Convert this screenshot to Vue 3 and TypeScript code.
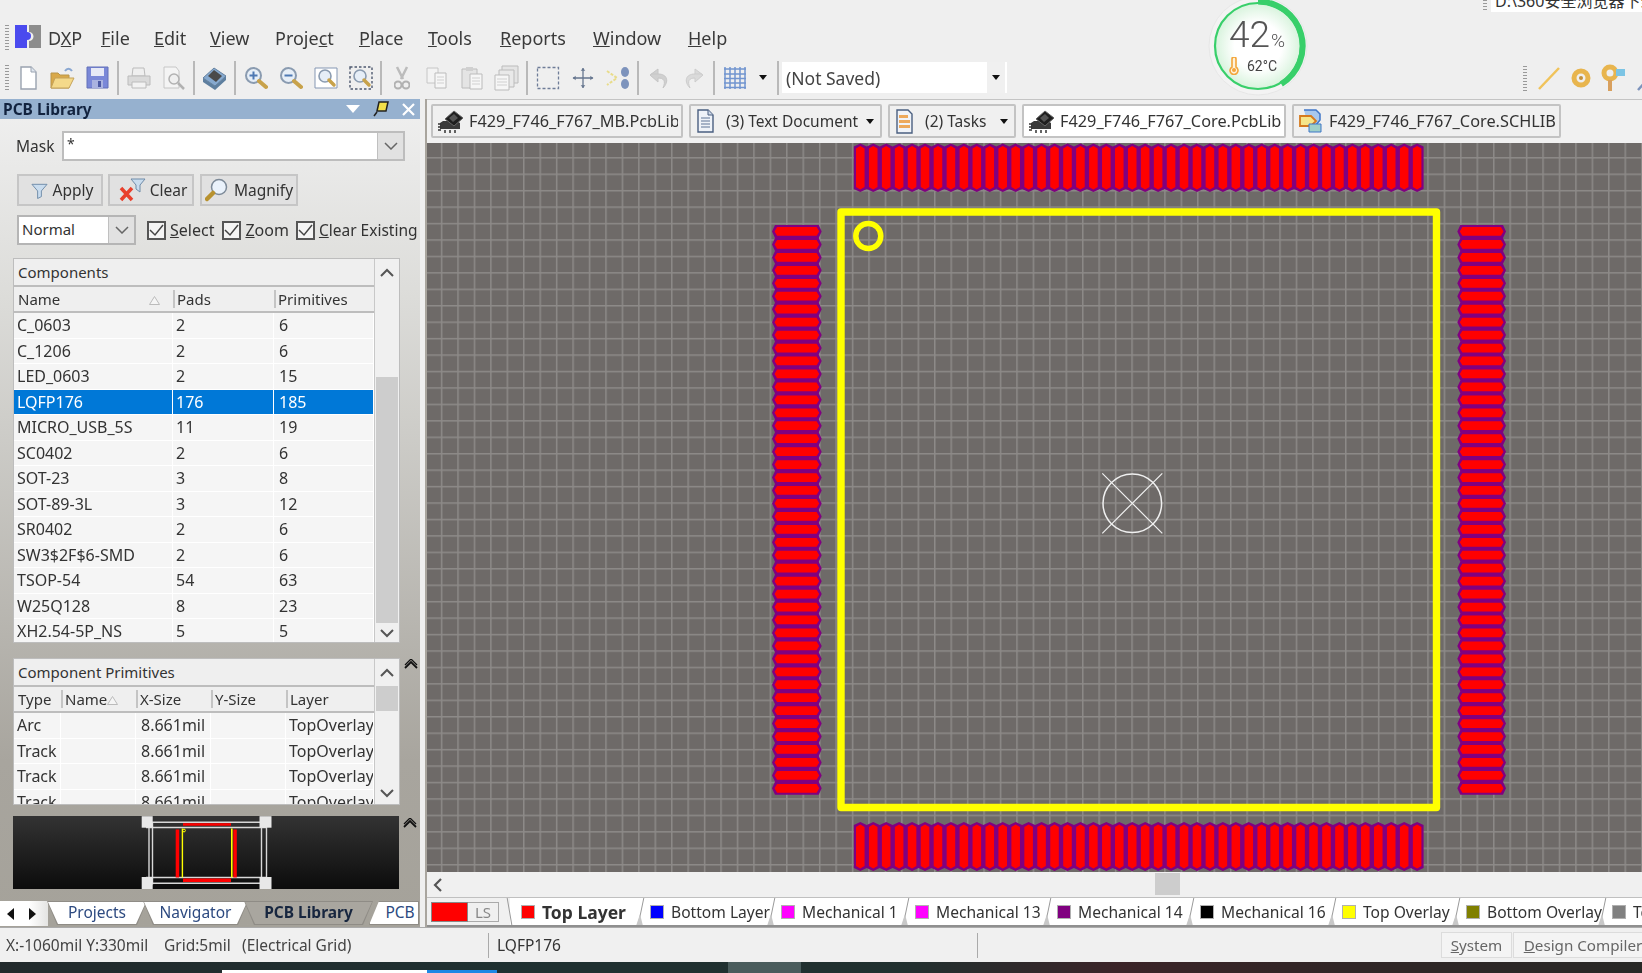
<script setup lang="ts">
const menus = [
  { pre: 'D', u: 'X', post: 'P', w: 53 },
  { pre: '', u: 'F', post: 'ile', w: 53 },
  { pre: '', u: 'E', post: 'dit', w: 56 },
  { pre: '', u: 'V', post: 'iew', w: 65 },
  { pre: 'Proje', u: 'c', post: 't', w: 84 },
  { pre: '', u: 'P', post: 'lace', w: 69 },
  { pre: '', u: 'T', post: 'ools', w: 72 },
  { pre: '', u: 'R', post: 'eports', w: 93 },
  { pre: '', u: 'W', post: 'indow', w: 95 },
  { pre: '', u: 'H', post: 'elp', w: 60 },
]
const components = [
  ['C_0603', '2', '6'],
  ['C_1206', '2', '6'],
  ['LED_0603', '2', '15'],
  ['LQFP176', '176', '185'],
  ['MICRO_USB_5S', '11', '19'],
  ['SC0402', '2', '6'],
  ['SOT-23', '3', '8'],
  ['SOT-89-3L', '3', '12'],
  ['SR0402', '2', '6'],
  ['SW3$2F$6-SMD', '2', '6'],
  ['TSOP-54', '54', '63'],
  ['W25Q128', '8', '23'],
  ['XH2.54-5P_NS', '5', '5'],
]
const primitives = ['Arc', 'Track', 'Track', 'Track']
const docTabs = [
  { name: 'F429_F746_F767_MB.PcbLib', icon: 'chip', w: 252, caret: false, active: false },
  { name: '(3) Text Document', icon: 'doc', w: 193, caret: true, active: false },
  { name: '(2) Tasks', icon: 'task', w: 128, caret: true, active: false },
  { name: 'F429_F746_F767_Core.PcbLib', icon: 'chip', w: 264, caret: false, active: true },
  { name: 'F429_F746_F767_Core.SCHLIB', icon: 'sch', w: 269, caret: false, active: false },
]
const layers = [
  { name: 'Top Layer', color: '#ff0000', w: 129, bold: true },
  { name: 'Bottom Layer', color: '#0000ff', w: 131, bold: false },
  { name: 'Mechanical 1', color: '#ff00ff', w: 134, bold: false },
  { name: 'Mechanical 13', color: '#ff00ff', w: 142, bold: false },
  { name: 'Mechanical 14', color: '#800080', w: 143, bold: false },
  { name: 'Mechanical 16', color: '#000000', w: 142, bold: false },
  { name: 'Top Overlay', color: '#ffff00', w: 124, bold: false },
  { name: 'Bottom Overlay', color: '#808000', w: 146, bold: false },
  { name: 'Top Solder', color: '#808080', w: 140, bold: false },
]
const pitch = 12.95
const count = Array.from({ length: 44 }, (_, i) => i)

function hPad(x: number, y: number, w: number, h: number, c: number): string {
  return `M${x + c} ${y}H${x + w - c}L${x + w} ${y + h / 2}L${x + w - c} ${y + h}H${x + c}L${x} ${y + h / 2}Z`
}
function vPad(x: number, y: number, w: number, h: number, c: number): string {
  return `M${x} ${y + c}L${x + w / 2} ${y}L${x + w} ${y + c}V${y + h - c}L${x + w / 2} ${y + h}L${x} ${y + h - c}Z`
}
const padOuter = count
  .map((i) => {
    const px = 853.8 + i * pitch
    const py = 225 + i * pitch
    return (
      vPad(px, 143.5, pitch, 48.5, 3) +
      vPad(px, 822, pitch, 49, 3) +
      hPad(772, py, 49.7, pitch, 3) +
      hPad(1457.3, py, 48.7, pitch, 3)
    )
  })
  .join('')
const padInner = count
  .map((i) => {
    const px = 853.8 + i * pitch
    const py = 225 + i * pitch
    return (
      vPad(px + 2.2, 146, pitch - 4.4, 43.5, 2.6) +
      vPad(px + 2.2, 824.5, pitch - 4.4, 44, 2.6) +
      hPad(774.5, py + 2.1, 44.7, pitch - 4.2, 2.6) +
      hPad(1459.8, py + 2.1, 43.7, pitch - 4.2, 2.6)
    )
  })
  .join('')
</script>

<template>
  <div class="app">
    <div class="menubar soft">
      <span class="grip"></span>
      <svg class="logo" width="26" height="23" viewBox="0 0 26 23">
        <path d="M0 0h12v7a3.500 3.500 0 0 1 0 8v8H0z" fill="#4a4aee" />
        <path d="M14 0h12v23H14v-7a4 4 0 0 0 0-9z" fill="#8d8d8d" />
      </svg>
      <span v-for="m in menus" :key="m.post + m.u" class="menu" :style="{ width: m.w + 'px' }">{{ m.pre }}<u>{{ m.u }}</u>{{ m.post }}</span>
    </div>

    <div class="toolbar soft">
      <span class="grip small"></span>
      <span class="ti"><svg width="20" height="24" viewBox="0 0 20 24"><path d="M3 1h10l5 5v17H3z" fill="#fff" stroke="#9aa3b0" stroke-width="1.400" /><path d="M13 1v5h5" fill="#dfe6ee" stroke="#9aa3b0" /></svg></span>
      <span class="ti"><svg width="25" height="24" viewBox="0 0 25 24"><path d="M1 7h7l2 2h9v13H1z" fill="#d9a94a" stroke="#b8954a" /><path d="M5 12h19l-5 10H1z" fill="#f4d98a" stroke="#c4a25a" /><path d="M15 5c2-3 5-3 7 0" fill="none" stroke="#8aa7d1" stroke-width="2" /></svg></span>
      <span class="ti"><svg width="23" height="23" viewBox="0 0 23 23"><path d="M1 1h21v21H1z" fill="#7a88d8" stroke="#6270b8" /><path d="M5 2h13v8H5z" fill="#e6e9f6" /><path d="M6 14h11v8H6z" fill="#aab3e0" /><path d="M12 15h3v6h-3z" fill="#4d5aa4" /></svg></span>
      <i class="sep"></i>
      <span class="ti fade"><svg width="24" height="22" viewBox="0 0 24 22"><path d="M6 1h11l1 8H5z" fill="#eee" stroke="#999" /><path d="M1 9h22v9H1z" fill="#ccc" stroke="#999" /><path d="M5 15h14v6H5z" fill="#f4f4f4" stroke="#999" /></svg></span>
      <span class="ti fade"><svg width="24" height="24" viewBox="0 0 24 24"><path d="M2 1h12l3 4v17H2z" fill="#f7f7f7" stroke="#aaa" /><circle cx="12" cy="13" r="5" fill="#eee" stroke="#888" stroke-width="1.500" /><path d="M16 17l6 6" stroke="#888" stroke-width="2.500" /></svg></span>
      <i class="sep"></i>
      <span class="ti"><svg width="25" height="24" viewBox="0 0 25 24"><path d="M1 12l11-10 12 8-11 10z" fill="#86a9cf" stroke="#64809e" /><path d="M1 12v4l12 8 11-10v-4L13 20z" fill="#5e7f9f" /><path d="M6 10l6-6 8 6-6 6z" fill="#4a4a4a" /></svg></span>
      <i class="sep"></i>
      <span class="ti"><svg width="24" height="24" viewBox="0 0 24 24"><circle cx="9.500" cy="9.500" r="7.500" fill="#e6eef7" stroke="#8a9bb0" stroke-width="2" /><path d="M5.500 9.500h8M9.500 5.500v8" stroke="#4d78b3" stroke-width="2" /><path d="M15 15l7 6" stroke="#c8a24a" stroke-width="4" stroke-linecap="round" /></svg></span>
      <span class="ti"><svg width="24" height="24" viewBox="0 0 24 24"><circle cx="9.500" cy="9.500" r="7.500" fill="#e6eef7" stroke="#8a9bb0" stroke-width="2" /><path d="M5.500 9.500h8" stroke="#4d78b3" stroke-width="2" /><path d="M15 15l7 6" stroke="#c8a24a" stroke-width="4" stroke-linecap="round" /></svg></span>
      <span class="ti"><svg width="24" height="24" viewBox="0 0 24 24"><path d="M1 2h22v20H1z" fill="#fff" stroke="#8597b3" /><circle cx="11" cy="10" r="6" fill="#e6eef7" stroke="#8a9bb0" stroke-width="1.600" /><path d="M15 14l5 5" stroke="#c8a24a" stroke-width="3.500" stroke-linecap="round" /></svg></span>
      <span class="ti"><svg width="24" height="24" viewBox="0 0 24 24"><path d="M1 1h22v22H1z" fill="none" stroke="#4f5a70" stroke-dasharray="2.500 2" stroke-width="1.400" /><circle cx="11" cy="10" r="6" fill="#e6eef7" stroke="#8a9bb0" stroke-width="1.600" /><path d="M15 14l5 5" stroke="#c8a24a" stroke-width="3.500" stroke-linecap="round" /></svg></span>
      <i class="sep"></i>
      <span class="ti fade"><svg width="16" height="24" viewBox="0 0 16 24"><path d="M3 1l6 12M13 1L7 13" stroke="#999" stroke-width="2.500" /><circle cx="4" cy="19" r="3.500" fill="none" stroke="#888" stroke-width="2" /><circle cx="12" cy="19" r="3.500" fill="none" stroke="#888" stroke-width="2" /></svg></span>
      <span class="ti fade"><svg width="24" height="24" viewBox="0 0 24 24"><path d="M2 2h11v15H2z" fill="#f5f5f5" stroke="#aaa" /><path d="M10 7h11v15H10z" fill="#fafafa" stroke="#999" /><path d="M12 11h7M12 14h7M12 17h7" stroke="#bbb" /></svg></span>
      <span class="ti fade"><svg width="24" height="24" viewBox="0 0 24 24"><path d="M2 3h15v19H2z" fill="#ddd" stroke="#999" /><path d="M6 1h7v4H6z" fill="#bbb" /><path d="M10 8h12v15H10z" fill="#fafafa" stroke="#999" /><path d="M12 12h8M12 15h8M12 18h8" stroke="#bbb" /></svg></span>
      <span class="ti fade"><svg width="26" height="26" viewBox="0 0 26 26"><path d="M8 1h16v17H8z" fill="#ddd" stroke="#999" /><path d="M5 5h15v17H5z" fill="#e4e4e4" stroke="#999" /><path d="M1 10h14v15H1z" fill="#fafafa" stroke="#999" /><path d="M3 14h10M3 17h10M3 20h10" stroke="#bbb" /></svg></span>
      <i class="sep"></i>
      <span class="ti"><svg width="24" height="24" viewBox="0 0 24 24"><path d="M1.500 1.500h21v21h-21z" fill="none" stroke="#6f7d98" stroke-dasharray="3 2" stroke-width="1.300" /></svg></span>
      <span class="ti"><svg width="22" height="24" viewBox="0 0 24 24"><path d="M12 1v22M1 12h22" stroke="#66768f" stroke-width="1.400" /><path d="M12 1l-2.500 3h5zM12 23l-2.500-3h5zM1 12l3-2.500v5zM23 12l-3-2.500v5z" fill="#66768f" /></svg></span>
      <span class="ti"><svg width="24" height="24" viewBox="0 0 24 24"><path d="M1 5l10 7-10 7" fill="none" stroke="#e8dc8a" stroke-width="2" stroke-dasharray="3 1.500" /><ellipse cx="19" cy="6" rx="4" ry="5" fill="#7d93bc" /><ellipse cx="19" cy="18" rx="4" ry="5" fill="#7d93bc" /></svg></span>
      <i class="sep"></i>
      <span class="ti fade"><svg width="20" height="24" viewBox="0 0 20 24"><path d="M2 8h7V3L1 9l8 7v-4c6 0 8 3 5 10 6-6 5-14-5-14" fill="#bbb" stroke="#aaa" /></svg></span>
      <span class="ti fade"><svg width="20" height="24" viewBox="0 0 20 24"><path d="M18 8h-7V3l8 6-8 7v-4c-6 0-8 3-5 10-6-6-5-14 5-14" fill="#ccc" stroke="#b5b5b5" /></svg></span>
      <i class="sep"></i>
      <span class="ti"><svg width="22" height="22" viewBox="0 0 22 22"><path d="M1 0v22M6 0v22M11 0v22M16 0v22M21 0v22M0 2h22M0 7h22M0 11.500h22M0 16h22M0 20.500h22" stroke="#7295d0" stroke-width="1.500" /></svg></span>
      <span class="caret-cell"><span class="caret"></span></span>
      <i class="sep"></i>
      <div class="combo"><span class="combo-text">(Not Saved)</span><span class="combo-btn"><span class="caret"></span></span></div>
      <div class="tool-right">
        <span class="grip small"></span>
        <svg class="tr" width="24" height="26" viewBox="0 0 24 26"><path d="M2 24L22 3" stroke="#f0c35a" stroke-width="2.500" /></svg>
        <svg class="tr" width="20" height="20" viewBox="0 0 20 20"><circle cx="10" cy="10" r="7" fill="none" stroke="#e8b54e" stroke-width="5" /><circle cx="10" cy="10" r="2" fill="#c2903a" /></svg>
        <svg class="tr" width="26" height="28" viewBox="0 0 26 28"><circle cx="9" cy="9" r="6" fill="none" stroke="#e8b54e" stroke-width="5" /><path d="M7 16h4v11H7z" fill="#d8a05e" /><path d="M15 5h9v7h-9z" fill="#7cc4e4" /></svg>
        <svg class="tr" width="14" height="28" viewBox="0 0 14 28"><path d="M1 26L12 14" stroke="#7d93bc" stroke-width="2.500" /></svg>
      </div>
    </div>

    <div class="main">
      <aside class="panel soft">
        <div class="panel-head">
          <span>PCB Library</span>
          <div class="head-icons">
            <svg width="14" height="8" viewBox="0 0 14 8"><path d="M0 0h14L7 8z" fill="#fff" /></svg>
            <svg width="16" height="16" viewBox="0 0 16 16"><path d="M6 1h9l-2 9H4z" fill="#f2e04a" stroke="#222" stroke-width="1.500" /><path d="M4 11L1 15" stroke="#222" stroke-width="1.500" /></svg>
            <svg width="13" height="13" viewBox="0 0 13 13"><path d="M1 1l11 11M12 1L1 12" stroke="#fff" stroke-width="2.200" /></svg>
          </div>
        </div>
        <div class="mask-row">
          <span class="mask-label">Mask</span>
          <div class="mask-input"><span class="mask-val">*</span><span class="drop"><svg width="14" height="8" viewBox="0 0 14 8"><path d="M1 1l6 6 6-6" fill="none" stroke="#666" stroke-width="1.500" /></svg></span></div>
        </div>
        <div class="btn-row">
          <button class="btn b-apply"><svg width="17" height="18" viewBox="0 0 18 18"><path d="M1 3h16l-6 7v6l-4 2v-8z" fill="#c9dcee" stroke="#6f8ba8" /></svg>Apply</button>
          <button class="btn b-clear"><svg width="28" height="24" viewBox="0 0 28 24"><path d="M2 10l11 12M13 10L2 22" stroke="#e8402c" stroke-width="3.500" /><path d="M12 1h14l-5 6v7l-4-3V7z" fill="#c9dcee" stroke="#6f8ba8" /></svg>Clear</button>
          <button class="btn b-mag"><svg width="24" height="24" viewBox="0 0 24 24"><circle cx="14" cy="9" r="7.500" fill="#eaf2fb" stroke="#7d8a98" stroke-width="1.500" /><path d="M8 15l-6 6" stroke="#b8922f" stroke-width="4.500" stroke-linecap="round" /></svg>Magnify</button>
        </div>
        <div class="opt-row">
          <div class="mode"><span class="mode-val">Normal</span><span class="drop"><svg width="14" height="8" viewBox="0 0 14 8"><path d="M1 1l6 6 6-6" fill="none" stroke="#666" stroke-width="1.500" /></svg></span></div>
          <label class="chk c1"><span class="box"><svg width="15" height="13" viewBox="0 0 15 13"><path d="M1 6l5 5 8-10" fill="none" stroke="#444" stroke-width="1.500" /></svg></span><span><u>S</u>elect</span></label>
          <label class="chk c2"><span class="box"><svg width="15" height="13" viewBox="0 0 15 13"><path d="M1 6l5 5 8-10" fill="none" stroke="#444" stroke-width="1.500" /></svg></span><span><u>Z</u>oom</span></label>
          <label class="chk c3"><span class="box"><svg width="15" height="13" viewBox="0 0 15 13"><path d="M1 6l5 5 8-10" fill="none" stroke="#444" stroke-width="1.500" /></svg></span><span><u>C</u>lear Existing</span></label>
        </div>

        <section class="tbl comp">
          <div class="tbl-main">
            <div class="tbl-title">Components</div>
            <div class="row head comp-cols">
              <span class="cell name-head">Name<svg width="11" height="9" viewBox="0 0 11 9"><path d="M5.500 0.500L10.500 8.500H0.500z" fill="#f5f5f5" stroke="#bbb" /></svg></span>
              <span class="cell">Pads</span>
              <span class="cell">Primitives</span>
            </div>
            <div v-for="c in components" :key="c[0]" class="row body comp-cols" :class="{ sel: c[0] === 'LQFP176' }">
              <span class="cell">{{ c[0] }}</span>
              <span class="cell">{{ c[1] }}</span>
              <span class="cell">{{ c[2] }}</span>
            </div>
          </div>
          <div class="sbar">
            <svg class="chev" width="14" height="9" viewBox="0 0 14 9"><path d="M1 8l6-6 6 6" fill="none" stroke="#555" stroke-width="2" /></svg>
            <div class="track"><div class="thumb thumb-comp"></div></div>
            <svg class="chev" width="14" height="9" viewBox="0 0 14 9"><path d="M1 1l6 6 6-6" fill="none" stroke="#555" stroke-width="2" /></svg>
          </div>
          <svg class="dbl d-one" width="16" height="10" viewBox="0 0 16 10"><path d="M2 9l6-6 6 6" fill="none" stroke="#111" stroke-width="1.800" /><path d="M2 6l6-6 6 6" fill="none" stroke="#111" stroke-width="1.300" /></svg>
        </section>

        <section class="tbl prim">
          <div class="tbl-main">
            <div class="tbl-title">Component Primitives</div>
            <div class="row head prim-cols">
              <span class="cell">Type</span>
              <span class="cell name-head">Name<svg width="11" height="9" viewBox="0 0 11 9"><path d="M5.500 0.500L10.500 8.500H0.500z" fill="#f5f5f5" stroke="#bbb" /></svg></span>
              <span class="cell">X-Size</span>
              <span class="cell">Y-Size</span>
              <span class="cell">Layer</span>
            </div>
            <div v-for="(p, i) in primitives" :key="i" class="row body prim-cols">
              <span class="cell">{{ p }}</span>
              <span class="cell"></span>
              <span class="cell">8.661mil</span>
              <span class="cell"></span>
              <span class="cell">TopOverlay</span>
            </div>
          </div>
          <div class="sbar">
            <svg class="chev" width="14" height="9" viewBox="0 0 14 9"><path d="M1 8l6-6 6 6" fill="none" stroke="#555" stroke-width="2" /></svg>
            <div class="track"><div class="thumb thumb-prim"></div></div>
            <svg class="chev" width="14" height="9" viewBox="0 0 14 9"><path d="M1 1l6 6 6-6" fill="none" stroke="#555" stroke-width="2" /></svg>
          </div>
        </section>

        <div class="preview-wrap">
          <svg class="preview" width="386" height="73" viewBox="13 815.500 386 73">
            <defs>
              <linearGradient id="pv" x1="0" y1="0" x2="0" y2="1"><stop offset="0" stop-color="#333" /><stop offset="1" stop-color="#0c0c0c" /></linearGradient>
            </defs>
            <rect x="13" y="815.500" width="386" height="73" fill="url(#pv)" />
            <path d="M146 821.700H266M146 827H266M146 877H266M146 882.700H266M149 821V884M152.500 821V884M261.500 821V884M266.500 821V884" stroke="#d8d8d8" stroke-width="1.400" fill="none" />
            <rect x="183" y="822.700" width="48" height="2.500" fill="#ff0000" />
            <rect x="183" y="878" width="48" height="3.500" fill="#ff0000" />
            <rect x="175.700" y="829" width="3.500" height="48" fill="#ff0000" />
            <rect x="233.300" y="829" width="3.500" height="48" fill="#ff0000" />
            <rect x="181.700" y="828" width="1.400" height="49" fill="#ffff00" />
            <rect x="231" y="828" width="1.600" height="49" fill="#ffff00" />
            <circle cx="184" cy="830" r="1.400" fill="none" stroke="#ffff00" />
            <rect x="141.700" y="815.700" width="11" height="11.500" fill="#e8e8e8" />
            <rect x="259.500" y="815.700" width="12" height="11.500" fill="#e8e8e8" />
            <rect x="141.700" y="876.500" width="11" height="12" fill="#e8e8e8" />
            <rect x="259.500" y="876.500" width="12" height="12" fill="#e8e8e8" />
          </svg>
          <svg class="dbl d-two" width="16" height="10" viewBox="0 0 16 10"><path d="M2 9l6-6 6 6" fill="none" stroke="#111" stroke-width="1.800" /><path d="M2 6l6-6 6 6" fill="none" stroke="#111" stroke-width="1.300" /></svg>
        </div>

        <div class="ptabs">
          <div class="arrows">
            <svg width="8" height="12" viewBox="0 0 8 12"><path d="M7 0v12L0 6z" fill="#111" /></svg>
            <svg width="8" height="12" viewBox="0 0 8 12"><path d="M1 0v12l7-6z" fill="#111" /></svg>
          </div>
          <div class="ptab t-proj"><span>Projects</span></div>
          <div class="ptab t-nav"><span>Navigator</span></div>
          <div class="ptab t-lib on"><span>PCB Library</span></div>
          <div class="ptab t-pcb"><span>PCB</span></div>
        </div>
      </aside>
      <div class="gutter"></div>

      <div class="work">
        <div class="doctabs soft">
          <div v-for="t in docTabs" :key="t.name" class="doctab" :class="{ active: t.active }" :style="{ width: t.w + 'px' }">
            <svg v-if="t.icon === 'chip'" width="26" height="25" viewBox="0 0 26 25"><path d="M2 14l3-2h14l3 2v6H2z" fill="#3a3a3a" /><path d="M0 15h3M0 18h3M0 21h3M7 21v3M12 21v3M17 21v3" stroke="#333" stroke-width="1.500" /><path d="M7 10l9-8 9 7-9 8z" fill="#1f1f1f" stroke="#666" /><path d="M11 9l5-4 4 4-5 4z" fill="#555" /></svg>
            <svg v-else-if="t.icon === 'doc'" width="19" height="24" viewBox="0 0 19 24"><path d="M2 1h10l5 5v17H2z" fill="#eef2f8" stroke="#4a5f80" stroke-width="1.400" /><path d="M12 1v5h5" fill="#cdd8e8" stroke="#4a5f80" /><path d="M5 9h9M5 12h9M5 15h9M5 18h9" stroke="#5f7596" /></svg>
            <svg v-else-if="t.icon === 'task'" width="19" height="25" viewBox="0 0 19 25"><path d="M2 1h11l4 4v19H2z" fill="#f0f3f8" stroke="#4a5f80" stroke-width="1.400" /><path d="M4 6h9v3H4zM4 11h11v3H4zM4 16h11v3H4z" fill="#eda95c" /></svg>
            <svg v-else width="25" height="26" viewBox="0 0 25 26"><path d="M5 2h12l4 4v6l-4 5H9" fill="#a8c8ee" stroke="#3f76c8" stroke-width="1.500" /><path d="M1 8h11l5 5-5 5H1z" fill="#f5e58a" stroke="#d57a1e" stroke-width="1.800" /><path d="M10 16h12v8H10z" fill="#9fd0c8" stroke="#3f76c8" /></svg>
            <span class="doctab-text" :class="'di-' + t.icon">{{ t.name }}</span>
            <span v-if="t.caret" class="caret"></span>
          </div>
        </div>

        <svg class="canvas" width="1215" height="729" viewBox="427 143 1215 729">
          <defs>
            <pattern id="grid" patternUnits="userSpaceOnUse" x="1131.300" y="502.300" width="16.440" height="16.440">
              <rect width="16.440" height="16.440" fill="#6e6a68" />
              <rect width="1.500" height="16.440" fill="#8d8a88" />
              <rect width="16.440" height="1.500" fill="#8d8a88" />
            </pattern>
          </defs>
          <rect x="427" y="143" width="1215" height="729" fill="url(#grid)" />
          <path :d="padOuter" fill="#800080" />
          <path :d="padInner" fill="#ff0000" />
          <rect x="841" y="212" width="595.500" height="595.500" fill="none" stroke="#ffff00" stroke-width="7.400" stroke-linejoin="round" />
          <circle cx="868.300" cy="236" r="12.500" fill="none" stroke="#ffff00" stroke-width="5.500" />
          <circle cx="1132.300" cy="503.300" r="29.300" fill="none" stroke="#f0f0f0" stroke-width="1.500" />
          <path d="M1102.300 473.300l60 60M1162.300 473.300l-60 60" stroke="#f0f0f0" stroke-width="1.200" />
        </svg>

        <div class="hscroll">
          <svg width="10" height="14" viewBox="0 0 10 14"><path d="M8 1L2 7l6 6" fill="none" stroke="#555" stroke-width="2.200" /></svg>
          <div class="hthumb"></div>
        </div>

        <div class="layers soft">
          <div class="ls"><span class="ls-swatch"></span><span class="ls-text">LS</span></div>
          <div v-for="(l, i) in layers" :key="l.name" class="ltab" :class="{ bold: l.bold }" :style="{ width: l.w + 'px' }">
            <svg class="slant" width="14" height="29" viewBox="0 0 14 29">
              <path v-if="i === 0" d="M1 0L6 29" stroke="#999" fill="none" />
              <template v-else>
                <path d="M3 29L9 0" stroke="#999" fill="none" />
                <path d="M1 29L5 17L8 29z" fill="#c8c8c8" />
              </template>
            </svg>
            <span class="swatch" :style="{ background: l.color }"></span>
            <span>{{ l.name }}</span>
          </div>
        </div>
      </div>
    </div>

    <div class="status soft">
      <span class="s-xy">X:-1060mil Y:330mil</span>
      <span class="s-grid">Grid:5mil</span>
      <span class="s-el">(Electrical Grid)</span>
      <i class="s-sep one"></i>
      <span class="s-name">LQFP176</span>
      <i class="s-sep two"></i>
      <span class="s-btn sys"><u>S</u>ystem</span>
      <span class="s-btn dc"><u>D</u>esign Compiler</span>
    </div>
    <div class="taskbar">
      <span class="task-white"></span><span class="task-blue"></span><span class="task-hi"></span>
    </div>

    <div class="gauge soft">
      <svg width="100" height="100" viewBox="0 0 100 100">
        <defs>
          <radialGradient id="gg" cx="0.500" cy="0.500" r="0.500"><stop offset="0.550" stop-color="#ffffff" /><stop offset="1" stop-color="#d7f3dc" /></radialGradient>
        </defs>
        <circle cx="50" cy="50" r="49" fill="#f3f3f3" stroke="#e6e6e6" />
        <circle cx="50" cy="50" r="43" fill="url(#gg)" stroke="#38cf6a" stroke-width="2.200" />
        <path d="M50 5.500A44.500 44.500 0 0 1 73.300 88" fill="none" stroke="#38cf6a" stroke-width="6" />
      </svg>
      <span class="g-num">42<small>%</small></span>
      <svg class="g-therm" width="10" height="18" viewBox="0 0 10 18"><path d="M3 2a2 2 0 0 1 4 0v8a4 4 0 1 1-4 0z" fill="#fff2d8" stroke="#f3a53a" stroke-width="1.600" /><circle cx="5" cy="13" r="2" fill="#f3a53a" /></svg>
      <span class="g-temp">62°C</span>
    </div>
    <div class="addr"><span class="addr-grip"></span><span class="addr-box">D:\360安全浏览器下载</span></div>
  </div>
</template>

<style>
html, body { margin: 0; overflow: hidden; background: #efefef; }
</style>

<style scoped>
.app {
  position: relative; width: 1642px; height: 973px; overflow: hidden;
  display: flex; flex-direction: column; background: #efefef;
  font-family: "Noto Sans", "Noto Sans CJK SC", sans-serif; color: #333; font-size: 16px;
}
.soft { filter: blur(0.4px); }
.menubar { height: 60px; display: flex; align-items: flex-end; padding: 0 0 11px 5px; box-sizing: border-box; flex: none; }
.grip { width: 4px; height: 25px; margin-bottom: -1px; background: repeating-linear-gradient(#999 0 1px, transparent 1px 3px); flex: none; }
.grip.small { height: 25px; margin: 0; }
.logo { margin: 0 7px 1px 6px; flex: none; }
.menu { font-size: 18px; line-height: 22px; color: #3a3a3a; flex: none; }

.toolbar { height: 39px; display: flex; align-items: center; padding: 0 0 4px 5px; box-sizing: border-box; flex: none; position: relative; }
.toolbar > .grip { margin-right: 1px; }
.ti { width: 35px; height: 30px; display: flex; align-items: center; justify-content: center; flex: none; }
.fade { opacity: 0.6; }
.sep { width: 2px; height: 34px; background: #b9b9b9; margin: 0 2px; flex: none; }
.caret-cell { width: 22px; display: flex; justify-content: center; flex: none; margin-right: 1px; }
.caret { width: 0; height: 0; border-left: 4px solid transparent; border-right: 4px solid transparent; border-top: 5px solid #111; display: block; flex: none; }
.combo { width: 225px; height: 31px; background: #fff; display: flex; align-items: center; margin-left: 1px; flex: none; box-sizing: border-box; }
.combo-text { flex: 1; font-size: 17.500px; padding-left: 4px; color: #444; }
.combo-btn { width: 18px; height: 100%; background: #f0f0f0; display: flex; align-items: center; justify-content: center; margin-right: 2px; }
.tool-right { position: absolute; left: 1523px; top: 4px; display: flex; align-items: center; gap: 10px; }
.tr { flex: none; }

.main { flex: none; height: 828px; display: flex; }
.panel { width: 420px; flex: none; background: linear-gradient(#f0f0f0, #dcdcd9 24%, #a8a59e 80%, #a5a29a); display: flex; flex-direction: column; position: relative; }
.gutter { width: 7px; flex: none; background: linear-gradient(90deg, #efefef 0 5px, #a9a59e 5px); }
.panel-head { height: 20px; background: #96b1cf; display: flex; align-items: center; justify-content: space-between; padding: 0 5px 0 3px; font-weight: 700; font-size: 15.500px; color: #12233f; flex: none; }
.head-icons { display: flex; align-items: center; gap: 13px; }
.mask-row { display: flex; align-items: center; margin: 12px 0 0 16px; height: 30px; flex: none; }
.mask-label { width: 46px; font-size: 15.500px; }
.mask-input { width: 343px; height: 30px; box-sizing: border-box; border: 2px solid #bdbdbd; background: #fff; display: flex; }
.mask-val { flex: 1; padding-left: 3px; line-height: 22px; font-size: 14px; }
.drop { width: 25px; background: #e1e1e1; border-left: 1px solid #c0c0c0; display: flex; align-items: center; justify-content: center; flex: none; }
.btn-row { display: flex; margin: 13px 0 0 17px; gap: 5px; flex: none; }
.btn { height: 32px; box-sizing: border-box; border: 2px solid #c6c6c6; background: #e1e1e1; display: flex; align-items: center; justify-content: center; gap: 5px; font: inherit; font-size: 15.500px; color: #333; padding: 0; }
.b-apply { width: 86px; padding-left: 4px; }
.b-clear { width: 86px; gap: 3px; padding-left: 4px; }
.b-mag { width: 98px; margin-left: 1px; }
.opt-row { display: flex; align-items: center; margin: 9px 0 0 17px; height: 30px; flex: none; position: relative; }
.mode { width: 119px; height: 30px; box-sizing: border-box; border: 2px solid #b5b5b5; background: #fff; display: flex; flex: none; }
.mode-val { flex: 1; padding-left: 3px; line-height: 24px; font-size: 15px; }
.chk { display: flex; align-items: center; gap: 4px; font-size: 16px; white-space: nowrap; flex: none; }
.c1 { margin-left: 11px; }
.c2 { margin-left: 8px; }
.c3 { margin-left: 7px; font-size: 15.500px; }
.box { width: 19px; height: 19px; box-sizing: border-box; border: 2px solid #555; background: #f4f4f4; display: flex; align-items: center; justify-content: center; flex: none; }

.tbl { display: flex; margin-left: 13px; width: 387px; flex: none; position: relative; border: 1px solid #bdbdbd; box-sizing: border-box; }
.comp { margin-top: 13px; height: 385px; }
.prim { margin-top: 15px; height: 147px; }
.tbl-main { flex: 1; min-width: 0; overflow: hidden; background: #f5f5f5; }
.tbl-title { height: 26px; background: #efefef; border-bottom: 2px solid #bdbdbd; line-height: 27px; padding-left: 4px; box-sizing: content-box; font-size: 15px; }
.row { display: grid; height: 25.500px; box-sizing: border-box; font-size: 16px; line-height: 24px; }
.comp-cols { grid-template-columns: 159px 101px 1fr; }
.prim-cols { grid-template-columns: 47px 75px 75px 75px 1fr; }
.row.head { height: 26px; background: #efefef; border-bottom: 2px solid #bdbdbd; font-size: 15px; }
.row.head .cell { padding-left: 4px; position: relative; }
.row.head .cell + .cell::before { content: ""; position: absolute; left: 0; top: 3px; bottom: 3px; width: 2px; background: #c4c4c4; }
.name-head svg { position: absolute; right: 13px; top: 9px; }
.prim-cols .name-head svg { right: 18px; }
.row.body { border-bottom: 1px solid #fff; }
.row.body .cell { padding-left: 3px; border-right: 1px solid #fff; overflow: hidden; white-space: nowrap; }
.row.body .cell:nth-child(3), .prim-cols.body .cell:nth-child(3) { padding-left: 5px; }
.sel { background: #0078d7; color: #fff; }
.sbar { width: 25px; flex: none; background: #f0f0f0; border-left: 1px solid #c8c8c8; box-sizing: border-box; display: flex; flex-direction: column; align-items: center; position: relative; }
.chev { margin: 9px 0; flex: none; }
.comp .chev:last-child { margin: 6px 0 4px; }
.prim .chev:last-child { margin: 7px 0 6px; }
.track { flex: 1; width: 100%; position: relative; }
.thumb { position: absolute; left: 1px; right: 1px; background: #cdcdcd; }
.thumb-comp { top: 91px; height: 246px; }
.thumb-prim { top: 0; height: 25px; }
.dbl { position: absolute; left: 389px; }
.d-one { left: 389px; top: 400px; }
.preview-wrap { position: relative; margin: 11px 0 0 13px; height: 73px; flex: none; }
.preview { display: block; }
.d-two { left: 389px; top: 2px; }

.ptabs { display: flex; height: 25px; margin-top: 12px; flex: none; align-items: stretch; }
.arrows { width: 48px; background: linear-gradient(90deg, #fff 60%, #e4e4e2); display: flex; align-items: center; gap: 13px; padding-left: 7px; box-sizing: border-box; flex: none; }
.ptab { position: relative; height: 24px; background: #8f8c86; clip-path: polygon(0 0, 100% 0, calc(100% - 10px) 100%, 10px 100%); display: flex; align-items: center; justify-content: center; color: #2d4a80; flex: none; font-size: 15.500px; }
.ptab::before { content: ""; position: absolute; inset: 1px 1px 1px 1px; background: #fff; clip-path: polygon(0 0, 100% 0, calc(100% - 10px) 100%, 10px 100%); }
.ptab span { position: relative; top: -1px; }
.ptab.on::before { background: #a9a69f; }
.ptab.on { font-weight: 700; color: #17263f; }
.t-proj { width: 100px; margin-left: -1px; }
.t-nav { width: 105px; margin-left: -4px; }
.t-lib { width: 129px; margin-left: -4px; }
.t-pcb { width: 50px; margin-left: -4px; clip-path: polygon(10px 0, 100% 0, 100% 100%, 0 100%); padding-left: 12px; box-sizing: border-box; }
.t-pcb::before { clip-path: none; }

.work { flex: 1; min-width: 0; display: flex; flex-direction: column; }
.doctabs { height: 44px; box-sizing: border-box; padding: 4px 0 0 4px; display: flex; gap: 6px; background: #f1f1f1; border-top: 1px solid #c4c4c4; flex: none; }
.doctab { height: 34px; box-sizing: border-box; border: 2px solid #c3c3c3; border-radius: 2px; background: #f0f0f0; display: flex; align-items: center; padding: 0 3px 0 5px; gap: 5px; font-size: 15.500px; white-space: nowrap; flex: none; color: #333; }
.doctab.active { background: #fff; }
.doctab-text { flex: 1; overflow: hidden; }
.di-chip, .di-sch { font-size: 16.300px; }
.di-doc, .di-task { padding-left: 6px; }
.doctab .caret { margin-right: 3px; }
.canvas { display: block; flex: none; }
.hscroll { height: 25px; background: #f0f0f0; display: flex; align-items: center; padding-left: 6px; flex: none; position: relative; }
.hthumb { position: absolute; left: 728px; top: 1px; width: 25px; height: 22px; background: #cdcdcd; }
.layers { height: 30px; background: #fff; border-top: 1px solid #c0c0c0; border-bottom: 2px solid #8f8f8f; box-sizing: border-box; display: flex; flex: none; overflow: hidden; font-size: 16px; }
.ls { width: 83px; flex: none; background: #f0f0f0; display: flex; align-items: center; padding-left: 4px; box-sizing: border-box; }
.ls-swatch { width: 37px; height: 20px; background: #ff0000; border: 1px solid #888; box-sizing: border-box; }
.ls-text { width: 31px; height: 20px; box-sizing: border-box; border: 1px solid #aaa; border-left: 0; color: #888; text-align: center; line-height: 19px; font-size: 15px; }
.ltab { flex: none; display: flex; align-items: center; position: relative; padding-left: 11px; box-sizing: border-box; white-space: nowrap; gap: 7px; font-size: 15.600px; }
.ltab.bold { font-weight: 700; font-size: 17.500px; }
.slant { position: absolute; left: -4px; top: -1px; }
.swatch { width: 14px; height: 14px; border: 1px solid #b0b0b0; box-sizing: border-box; flex: none; }

.status { height: 35px; background: #f0f0f0; border-top: 1px solid #aaa; box-sizing: border-box; position: relative; flex: none; display: flex; align-items: center; font-size: 15.500px; color: #444; white-space: nowrap; }
.s-xy { margin-left: 6px; width: 158px; flex: none; }
.s-grid { width: 78px; flex: none; }
.s-el { width: 246px; flex: none; }
.s-sep { width: 1px; height: 25px; background: #aaa; flex: none; }
.s-name { margin-left: 8px; width: 480px; flex: none; color: #333; }
.s-btn { height: 26px; box-sizing: border-box; border: 1px solid #dcdcdc; display: flex; align-items: center; justify-content: center; color: #666; flex: none; background: #f4f4f4; font-size: 15.200px; }
.sys { width: 71px; margin-left: 463px; }
.dc { width: 140px; margin-left: 1px; }

.taskbar { height: 11px; flex: none; position: relative; background: linear-gradient(90deg, #222a2c, #1f3031 30%, #21302f 55%, #3b2428 68%, #302626 82%, #282826); }
.task-white { position: absolute; left: 222px; width: 205px; top: 8px; height: 3px; background: #fff; }
.task-blue { position: absolute; left: 427px; width: 70px; top: 8px; height: 3px; background: #1e88e5; }
.task-hi { position: absolute; left: 728px; width: 73px; top: 0; height: 11px; background: #4a5c5c; }

.gauge { position: absolute; left: 1208px; top: -4px; width: 100px; height: 100px; }
.gauge svg:first-child { display: block; }
.g-num { position: absolute; left: 21px; top: 18px; font-family: Roboto, sans-serif; font-weight: 300; font-size: 37px; line-height: 42px; color: #555; }
.g-num small { font-size: 19px; margin-left: 1px; }
.g-therm { position: absolute; left: 21px; top: 61px; }
.g-temp { position: absolute; left: 39px; top: 61px; font-family: Roboto, sans-serif; font-size: 14px; line-height: 18px; color: #444; }
.addr { position: absolute; left: 1483px; top: 0; display: flex; height: 12px; overflow: hidden; }
.addr-grip { width: 4px; height: 10px; background: repeating-linear-gradient(#999 0 1px, transparent 1px 3px); margin-right: 4px; }
.addr-box { width: 151px; background: #fff; font-size: 16px; line-height: 14px; margin-top: -6px; padding: 0 0 3px 4px; white-space: nowrap; overflow: hidden; height: 18px; }
</style>
